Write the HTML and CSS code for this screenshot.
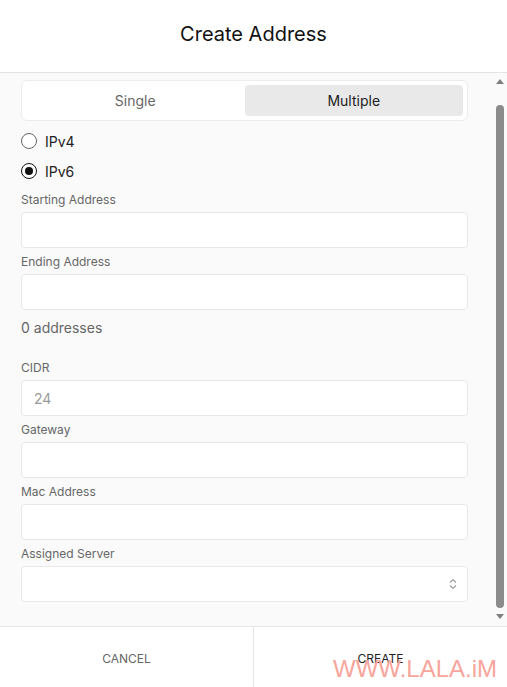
FILE: index.html
```
<!DOCTYPE html>
<html lang="en">
<head>
<meta charset="utf-8">
<title>Create Address</title>
<link rel="stylesheet" href="styles.css">
</head>
<body>
<div class="dialog">
  <header class="header">
    <h1 class="title">Create Address</h1>
  </header>
  <main class="body">
    <div class="content">
      <div class="segmented">
        <button class="seg">Single</button>
        <button class="seg seg-active">Multiple</button>
      </div>
      <div class="radios">
        <label class="radio"><span class="circle"></span><span class="radio-text">IPv4</span></label>
        <label class="radio"><span class="circle circle-on"></span><span class="radio-text">IPv6</span></label>
      </div>
      <div class="field">
        <div class="label">Starting Address</div>
        <div class="input"></div>
      </div>
      <div class="field">
        <div class="label">Ending Address</div>
        <div class="input"></div>
      </div>
      <div class="count">0 addresses</div>
      <div class="field">
        <div class="label">CIDR</div>
        <div class="input"><span class="placeholder">24</span></div>
      </div>
      <div class="field">
        <div class="label">Gateway</div>
        <div class="input"></div>
      </div>
      <div class="field">
        <div class="label">Mac Address</div>
        <div class="input"></div>
      </div>
      <div class="field">
        <div class="label">Assigned Server</div>
        <div class="input select">
          <svg class="chev" width="8" height="12" viewBox="0 0 8 12"><path d="M1 4.5 L4 1.5 L7 4.5 M1 7.5 L4 10.5 L7 7.5" fill="none" stroke="#9a9a9a" stroke-width="1.1"/></svg>
        </div>
      </div>
    </div>
    <div class="scrollbar" aria-hidden="true">
      <svg class="arrow" width="8" height="5" viewBox="0 0 8 5"><path d="M0 5 L4 0 L8 5 Z" fill="#7f7f7f"/></svg>
      <div class="thumb"></div>
      <svg class="arrow arrow-down" width="8" height="5" viewBox="0 0 8 5"><path d="M0 0 L4 5 L8 0 Z" fill="#7f7f7f"/></svg>
    </div>
  </main>
  <footer class="footer">
    <button class="btn btn-cancel">CANCEL</button>
    <button class="btn btn-create">CREATE</button>
  </footer>
  <div class="watermark">WWW.LALA.iM</div>
</div>
</body>
</html>
```
FILE: styles.css
```
* { box-sizing: border-box; }
html, body { margin: 0; padding: 0; }
body {
  font-family: Inter, "Noto Sans", sans-serif;
  background: #ffffff;
  color: #222;
}
.dialog {
  position: relative;
  height: 687px;
  display: flex;
  flex-direction: column;
}
.header {
  height: 73px;
  flex: none;
  border-bottom: 1px solid #e5e5e5;
  display: flex;
  align-items: center;
  justify-content: center;
  background: #fff;
}
.title {
  margin: 0;
  font-size: 20px;
  font-weight: 400;
  color: #111;
  padding-bottom: 4px;
}
.body {
  flex: 1;
  background: #fafafa;
  display: flex;
  overflow: hidden;
}
.content {
  flex: 1;
  padding: 7px 25px 50px 21px;
}
.scrollbar {
  flex: none;
  width: 14px;
  display: flex;
  flex-direction: column;
  align-items: center;
  padding: 6px 0 7px 0;
}
.arrow { flex: none; display: block; }
.thumb {
  flex: 1;
  width: 8px;
  margin: 21px 0 6px 0;
  background: #8b8b8b;
  border-radius: 4px;
}
.segmented {
  display: flex;
  height: 41px;
  padding: 4px;
  border: 1px solid #ececec;
  border-radius: 6px;
  background: #fff;
}
.seg {
  flex: 1;
  border: 0;
  background: transparent;
  border-radius: 4px;
  font-family: inherit;
  font-size: 14px;
  color: #666;
  padding: 0;
}
.seg-active {
  background: #e9e9e9;
  color: #222;
}
.radios {
  margin-top: 5px;
  display: flex;
  flex-direction: column;
}
.radio {
  height: 30px;
  display: flex;
  align-items: center;
  gap: 8px;
}
.circle {
  width: 16px;
  height: 16px;
  border-radius: 50%;
  border: 1px solid #666;
  background: #fff;
  display: flex;
  align-items: center;
  justify-content: center;
}
.circle-on {
  border: 1.5px solid #111;
}
.circle-on::after {
  content: "";
  width: 8px;
  height: 8px;
  border-radius: 50%;
  background: #111;
}
.radio-text {
  font-size: 14px;
  color: #222;
}
.field {
  margin-top: 6px;
  display: flex;
  flex-direction: column;
  gap: 4px;
}
.label {
  font-size: 12px;
  line-height: 16px;
  font-weight: 400;
  color: #666;
}
.input {
  height: 36px;
  background: #fff;
  border: 1px solid #e8e8e8;
  border-radius: 4px;
  display: flex;
  align-items: center;
  padding: 0 12px;
}
.placeholder {
  font-size: 14px;
  color: #9a9a9a;
}
.select {
  justify-content: flex-end;
  padding-right: 10px;
}
.count {
  margin-top: 8px;
  margin-bottom: 22px;
  font-size: 14px;
  line-height: 20px;
  color: #666;
}
.footer {
  height: 61px;
  flex: none;
  border-top: 1px solid #e5e5e5;
  display: flex;
  background: #fff;
}
.btn {
  flex: 1;
  border: 0;
  background: #fff;
  font-family: inherit;
  font-size: 12px;
  padding: 2px 0 0 0;
}
.btn-cancel {
  color: #666;
  border-right: 1px solid #e5e5e5;
}
.btn-create {
  color: #222;
}
.watermark {
  position: absolute;
  left: 333px;
  top: 657px;
  font-family: "Liberation Sans", Arial, sans-serif;
  font-size: 24px;
  line-height: 24px;
  color: #f8a59c;
  pointer-events: none;
}
```
